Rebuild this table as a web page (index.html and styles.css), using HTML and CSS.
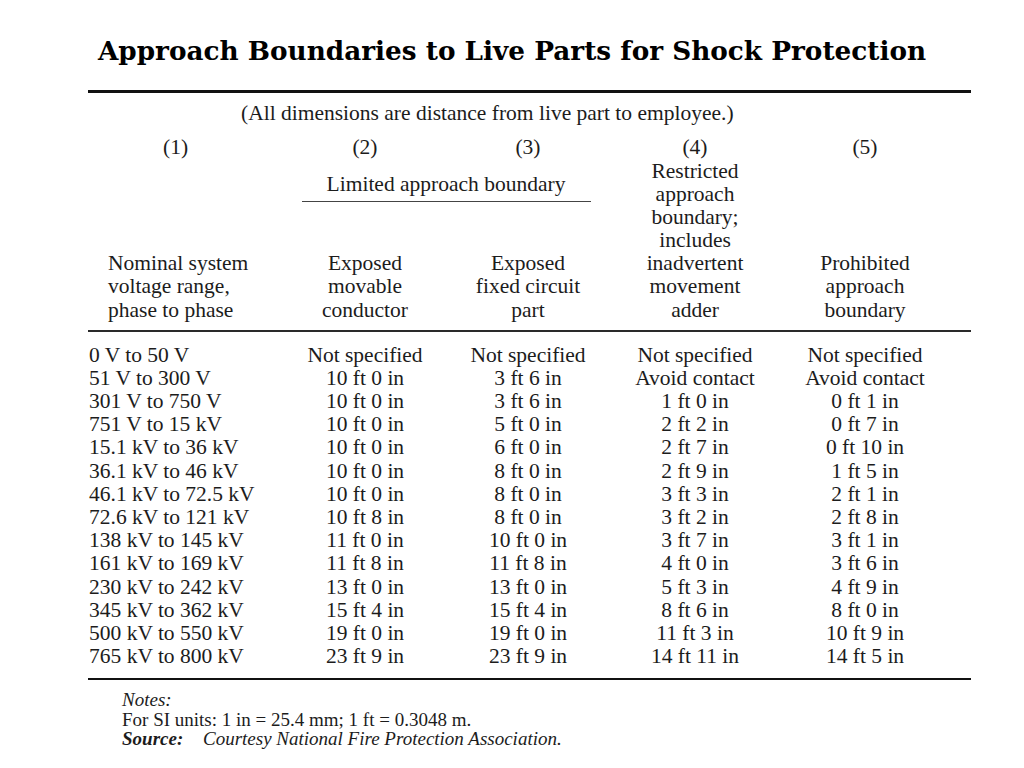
FILE: index.html
```html
<!DOCTYPE html>
<html>
<head>
<meta charset="utf-8">
<title>Approach Boundaries</title>
<link rel="stylesheet" href="styles.css">
</head>
<body>
<h1 class="title">Approach Boundaries to Live Parts for Shock Protection</h1>
<section class="sheet">
  <div class="rule rule-top"></div>
  <p class="caption">(All dimensions are distance from live part to employee.)</p>
  <div class="head">
    <div class="hcol c1">
      <div class="num1">(1)</div>
      <div class="label1">Nominal system<br>voltage range,<br>phase to phase</div>
    </div>
    <div class="group">
      <div class="pair"><div>(2)</div><div>(3)</div></div>
      <div class="glabel">Limited approach boundary</div>
      <div class="pair bottom"><div>Exposed<br>movable<br>conductor</div><div>Exposed<br>fixed circuit<br>part</div></div>
    </div>
    <div class="hcol c4">(4)<br>Restricted<br>approach<br>boundary;<br>includes<br>inadvertent<br>movement<br>adder</div>
    <div class="hcol c5">
      <div>(5)</div>
      <div>Prohibited<br>approach<br>boundary</div>
    </div>
  </div>
  <div class="rule rule-mid"></div>
  <div class="rows">
    <div class="row"><div class="v">0 V to 50 V</div><div>Not specified</div><div>Not specified</div><div>Not specified</div><div>Not specified</div></div>
    <div class="row"><div class="v">51 V to 300 V</div><div>10 ft 0 in</div><div>3 ft 6 in</div><div>Avoid contact</div><div>Avoid contact</div></div>
    <div class="row"><div class="v">301 V to 750 V</div><div>10 ft 0 in</div><div>3 ft 6 in</div><div>1 ft 0 in</div><div>0 ft 1 in</div></div>
    <div class="row"><div class="v">751 V to 15 kV</div><div>10 ft 0 in</div><div>5 ft 0 in</div><div>2 ft 2 in</div><div>0 ft 7 in</div></div>
    <div class="row"><div class="v">15.1 kV to 36 kV</div><div>10 ft 0 in</div><div>6 ft 0 in</div><div>2 ft 7 in</div><div>0 ft 10 in</div></div>
    <div class="row"><div class="v">36.1 kV to 46 kV</div><div>10 ft 0 in</div><div>8 ft 0 in</div><div>2 ft 9 in</div><div>1 ft 5 in</div></div>
    <div class="row"><div class="v">46.1 kV to 72.5 kV</div><div>10 ft 0 in</div><div>8 ft 0 in</div><div>3 ft 3 in</div><div>2 ft 1 in</div></div>
    <div class="row"><div class="v">72.6 kV to 121 kV</div><div>10 ft 8 in</div><div>8 ft 0 in</div><div>3 ft 2 in</div><div>2 ft 8 in</div></div>
    <div class="row"><div class="v">138 kV to 145 kV</div><div>11 ft 0 in</div><div>10 ft 0 in</div><div>3 ft 7 in</div><div>3 ft 1 in</div></div>
    <div class="row"><div class="v">161 kV to 169 kV</div><div>11 ft 8 in</div><div>11 ft 8 in</div><div>4 ft 0 in</div><div>3 ft 6 in</div></div>
    <div class="row"><div class="v">230 kV to 242 kV</div><div>13 ft 0 in</div><div>13 ft 0 in</div><div>5 ft 3 in</div><div>4 ft 9 in</div></div>
    <div class="row"><div class="v">345 kV to 362 kV</div><div>15 ft 4 in</div><div>15 ft 4 in</div><div>8 ft 6 in</div><div>8 ft 0 in</div></div>
    <div class="row"><div class="v">500 kV to 550 kV</div><div>19 ft 0 in</div><div>19 ft 0 in</div><div>11 ft 3 in</div><div>10 ft 9 in</div></div>
    <div class="row"><div class="v">765 kV to 800 kV</div><div>23 ft 9 in</div><div>23 ft 9 in</div><div>14 ft 11 in</div><div>14 ft 5 in</div></div>
  </div>
  <div class="rule rule-bottom"></div>
  <div class="notes">
    <div class="nl"><em>Notes:</em></div>
    <div class="nl">For SI units: 1 in = 25.4 mm; 1 ft = 0.3048 m.</div>
    <div class="nl"><strong class="src">Source:</strong><em>Courtesy National Fire Protection Association.</em></div>
  </div>
</section>
</body>
</html>
```

FILE: styles.css
```css
html, body {
  margin: 0;
  padding: 0;
  background: #ffffff;
}

body {
  width: 1024px;
  height: 768px;
  overflow: hidden;
  font-family: "Liberation Serif", "Times New Roman", serif;
  color: #1c1c1c;
}

.title {
  margin: 36px 0 0 0;
  height: 30px;
  line-height: 30px;
  font-family: "DejaVu Serif", serif;
  font-weight: bold;
  font-size: 26.3px;
  color: #000;
  text-align: center;
  white-space: nowrap;
}

.sheet {
  margin: 24px 0 0 88px;
  width: 883px;
  font-size: 21.5px;
  line-height: 23.15px;
}

.rule {
  background: #111;
}

.rule-top {
  height: 2.5px;
}

.rule-mid {
  height: 2px;
  background: #2a2a2a;
  margin-top: 8px;
}

.rule-bottom {
  height: 2.5px;
  margin-top: 9.5px;
}

.caption {
  margin: 9px 0 0 0;
  padding-left: 153px;
  white-space: nowrap;
}

.head {
  margin-top: 11.8px;
  display: grid;
  grid-template-columns: 196px 326px 170px 170px;
  height: 185.2px;
}

.hcol {
  display: flex;
  flex-direction: column;
  justify-content: space-between;
  text-align: center;
}

.c1 {
  text-align: left;
}

.num1 {
  padding-left: 75px;
}

.label1 {
  padding-left: 20px;
}

.group {
  display: flex;
  flex-direction: column;
}

.pair {
  display: grid;
  grid-template-columns: 162px 164px;
  text-align: center;
}

.pair.bottom {
  margin-top: auto;
}

.glabel {
  margin: 13.8px 19px 0 18px;
  padding-bottom: 4px;
  border-bottom: 1.5px solid #444;
  text-align: center;
  padding-right: 1px;
}

.rows {
  margin-top: 12px;
}

.row {
  display: grid;
  grid-template-columns: 196px 162px 164px 170px 170px;
  height: 23.2px;
  line-height: 23.2px;
  text-align: center;
  white-space: nowrap;
}

.row .v {
  text-align: left;
  padding-left: 1px;
}

.notes {
  margin-top: 10px;
  padding-left: 34px;
  font-size: 19px;
  line-height: 19.5px;
}

.nl {
  white-space: nowrap;
}

.notes em {
  font-style: italic;
}

.src {
  display: inline-block;
  width: 81px;
  font-weight: bold;
  font-style: italic;
}
```
